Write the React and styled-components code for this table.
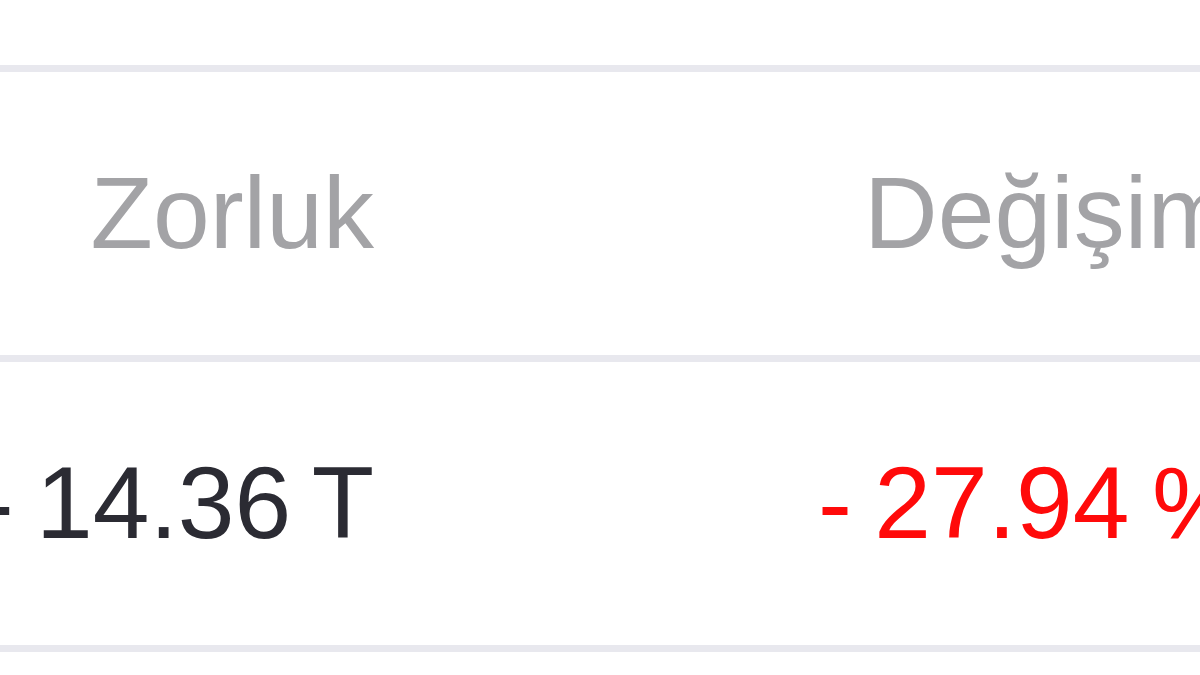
import React from "react";
import styled, { createGlobalStyle } from "styled-components";

const GlobalStyle = createGlobalStyle`
  html, body {
    margin: 0;
    padding: 0;
    background: #ffffff;
    overflow: hidden;
  }
  body {
    font-family: "Liberation Sans", Arial, sans-serif;
  }
`;

const Page = styled.div`
  width: 1200px;
  height: 675px;
  overflow: hidden;
  padding-top: 65px;
  box-sizing: border-box;
`;

const Table = styled.div`
  display: grid;
  grid-template-columns: 374px 1fr;
  width: 1400px;
  border-top: 7.5px solid #e8e8ee;
`;

const Cell = styled.div`
  height: 283px;
  display: flex;
  align-items: center;
  justify-content: ${(p) => (p.$right ? "flex-end" : "flex-start")};
  padding-left: ${(p) => p.$indent || 0}px;
  border-bottom: 7.5px solid #e8e8ee;
  font-size: 102px;
  line-height: 1.15;
  white-space: nowrap;
`;

const HeadText = styled.span`
  color: #a3a3a6;
`;

const Value = styled.span`
  color: ${(p) => (p.$down ? "#ff0a0a" : "#2b2b33")};
  word-spacing: -6px;
`;

export default function App() {
  return (
    <>
      <GlobalStyle />
      <Page>
        <Table>
          <Cell $right>
            <HeadText>Zorluk</HeadText>
          </Cell>
          <Cell $indent={490}>
            <HeadText>Değişim</HeadText>
          </Cell>
          <Cell $right>
            <Value>- 14.36 T</Value>
          </Cell>
          <Cell $indent={444}>
            <Value $down>- 27.94 %</Value>
          </Cell>
        </Table>
      </Page>
    </>
  );
}
